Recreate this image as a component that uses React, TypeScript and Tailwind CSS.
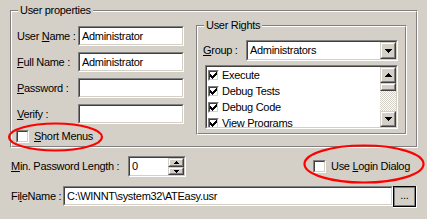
import React from "react";

const sunkenOuter =
  "border border-t-[#808080] border-l-[#808080] border-r-white border-b-white";
const sunkenInner =
  "border border-t-[#404040] border-l-[#404040] border-r-[#d4d0c8] border-b-[#d4d0c8]";
const raisedOuter =
  "border border-t-[#d4d0c8] border-l-[#d4d0c8] border-r-[#404040] border-b-[#404040]";
const raisedInner =
  "border border-t-white border-l-white border-r-[#808080] border-b-[#808080] bg-[#d4d0c8]";

function Sunken({
  className,
  children,
}: {
  className: string;
  children?: React.ReactNode;
}) {
  return (
    <div className={`${sunkenOuter} ${className}`}>
      <div className={`${sunkenInner} flex h-full w-full bg-white`}>
        {children}
      </div>
    </div>
  );
}

function Raised({
  className,
  children,
}: {
  className: string;
  children?: React.ReactNode;
}) {
  return (
    <div className={`${raisedOuter} ${className}`}>
      <div
        className={`${raisedInner} flex h-full w-full items-center justify-center`}
      >
        {children}
      </div>
    </div>
  );
}

function Arrow({ up, small }: { up?: boolean; small?: boolean }) {
  const d = small
    ? "M0 0h5v1h-5z M1 1h3v1h-3z M2 2h1v1h-1z"
    : "M0 0h7v1h-7z M1 1h5v1h-5z M2 2h3v1h-3z M3 3h1v1h-1z";
  const w = small ? 5 : 7;
  const h = small ? 3 : 4;
  return (
    <svg
      width={w}
      height={h}
      viewBox={`0 0 ${w} ${h}`}
      shapeRendering="crispEdges"
      className={up ? "rotate-180" : ""}
    >
      <path d={d} fill="#000" />
    </svg>
  );
}

function CheckBox({ checked, size = 13 }: { checked?: boolean; size?: number }) {
  return (
    <div
      className={`${sunkenOuter} shrink-0`}
      style={{ width: size, height: size }}
    >
      <div
        className={`${sunkenInner} flex h-full w-full items-center justify-center bg-white`}
      >
        {checked && (
          <svg width="7" height="7" viewBox="0 0 7 7" shapeRendering="crispEdges">
            <path
              d="M6 0h1v1h-1z M5 1h2v1h-2z M0 2h1v1h-1z M4 2h3v1h-3z M0 3h2v1h-2z M3 3h3v1h-3z M0 4h5v1h-5z M1 5h3v1h-3z M2 6h1v1h-1z"
              fill="#000"
            />
          </svg>
        )}
      </div>
    </div>
  );
}

function Group({
  title,
  className,
  children,
}: {
  title: string;
  className: string;
  children?: React.ReactNode;
}) {
  return (
    <div
      className={`relative border border-t-[#808080] border-l-[#808080] border-r-white border-b-white ${className}`}
    >
      <span className="absolute -top-[7px] left-[7px] bg-[#d4d0c8] px-[2px] leading-[13px]">
        {title}
      </span>
      <div className="h-full w-full border border-t-white border-l-white border-r-[#808080] border-b-[#808080]">
        {children}
      </div>
    </div>
  );
}

const fields = [
  { pre: "User ", key: "N", post: "ame :", value: "Administrator" },
  { pre: "", key: "F", post: "ull Name :", value: "Administrator" },
  { pre: "", key: "P", post: "assword :", value: "" },
  { pre: "", key: "V", post: "erify :", value: "" },
];

const rights = ["Execute", "Debug Tests", "Debug Code", "View Programs"];

export default function App() {
  return (
    <div className="relative h-[219px] w-[427px] overflow-hidden bg-[#d4d0c8] pl-[10px] pt-[10px] font-['Liberation_Sans',Arial,sans-serif] text-[11px] leading-[13px] tracking-[-0.3px] text-black">
      <Group title="User properties" className="h-[138px] w-[408px]">
        <div className="flex">
          {/* left column */}
          <div className="flex flex-col gap-[6px] pl-[5px] pt-[14px]">
            {fields.map((f) => (
              <div key={f.key} className="flex h-[20px] items-center">
                <span className="w-[61px]">
                  {f.pre}
                  <u>{f.key}</u>
                  {f.post}
                </span>
                <Sunken className="h-[20px] w-[106px]">
                  <span className="flex items-center pl-[2px]">{f.value}</span>
                </Sunken>
              </div>
            ))}
            <div className="-ml-[1px] flex h-[13px] items-center">
              <CheckBox />
              <span className="ml-[5px]">
                <u>S</u>hort Menus
              </span>
            </div>
          </div>

          {/* user rights */}
          <div className="ml-[12px] pt-[13px]">
            <Group title="User Rights" className="h-[110px] w-[211px]">
              <div className="mt-[13px] flex items-center pl-[5px]">
                <span className="w-[43px]">
                  <u>G</u>roup :
                </span>
                <Sunken className="h-[21px] w-[152px]">
                  <span className="flex flex-1 items-center pl-[2px]">
                    Administrators
                  </span>
                  <Raised className="h-full w-[16px]">
                    <Arrow />
                  </Raised>
                </Sunken>
              </div>
              <Sunken className="ml-[7px] mt-[4px] h-[64px] w-[193px]">
                <div className="flex-1 overflow-hidden">
                  {rights.map((r) => (
                    <div key={r} className="flex h-[16px] items-center pl-[1px]">
                      <CheckBox checked size={11} />
                      <span className="ml-[3px]">{r}</span>
                    </div>
                  ))}
                </div>
                <div className="flex w-[16px] flex-col">
                  <Raised className="h-[16px] w-[16px]">
                    <Arrow up />
                  </Raised>
                  <Raised className="h-[8px] w-[16px]" />
                  <div className="flex-1 bg-[repeating-conic-gradient(#d4d0c8_0%_25%,#ffffff_0%_50%)] bg-[length:2px_2px]" />
                  <Raised className="h-[16px] w-[16px]">
                    <Arrow />
                  </Raised>
                </div>
              </Sunken>
            </Group>
          </div>
        </div>
      </Group>

      {/* min password length row */}
      <div className="ml-[1px] mt-[8px] flex h-[21px] items-center">
        <span className="w-[117px]">
          <u>M</u>in. Password Length :
        </span>
        <Sunken className="h-[21px] w-[58px]">
          <span className="flex flex-1 items-center pl-[2px]">0</span>
          <div className="flex w-[16px] flex-col">
            <Raised className="h-[9px] w-[16px]">
              <Arrow up small />
            </Raised>
            <Raised className="h-[8px] w-[16px]">
              <Arrow small />
            </Raised>
          </div>
        </Sunken>
        <div className="ml-[127px] flex items-center">
          <CheckBox />
          <span className="ml-[5px]">
            Use <u>L</u>ogin Dialog
          </span>
        </div>
      </div>

      {/* file name row */}
      <div className="ml-[1px] mt-[9px] flex items-start">
        <span className="flex h-[20px] w-[52px] items-center">
          Fi<u>l</u>eName :
        </span>
        <Sunken className="h-[20px] w-[330px]">
          <span className="flex items-center pl-[2px]">
            C:\WINNT\system32\ATEasy.usr
          </span>
        </Sunken>
        <div className="border-b border-r border-white">
          <div className="h-[21px] w-[23px] border border-black">
            <div className="flex h-full w-full items-center justify-center border border-[#808080] pb-[2px]">
              ...
            </div>
          </div>
        </div>
      </div>

      {/* red annotation ellipses */}
      <svg
        className="pointer-events-none absolute left-0 top-0"
        width="427"
        height="219"
      >
        <ellipse cx="55.5" cy="137" rx="46.5" ry="13.5" fill="none" stroke="#ff0000" strokeWidth="2.2" />
        <ellipse cx="364" cy="164" rx="59.5" ry="18.5" fill="none" stroke="#ff0000" strokeWidth="2.2" />
      </svg>
    </div>
  );
}
